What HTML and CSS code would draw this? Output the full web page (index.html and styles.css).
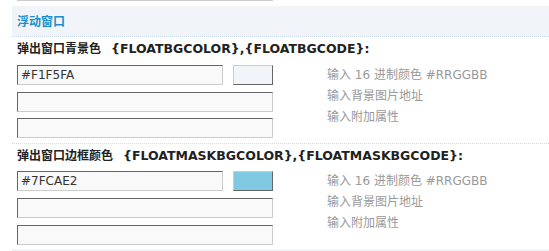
FILE: index.html
```html
<!DOCTYPE html>
<html>
<head>
<meta charset="utf-8">
<link rel="stylesheet" href="styles.css">
</head>
<body>
<div class="page">
  <div class="prev"></div>
  <div class="partition">浮动窗口</div>

  <div class="setting">
    <div class="label">弹出窗口青景色<span class="var">{FLOATBGCOLOR},{FLOATBGCODE}:</span></div>
    <div class="row">
      <div class="fields">
        <div class="line first">
          <input class="txt short" type="text" value="#F1F5FA">
          <span class="swatch" style="background:#F1F5FA"></span>
        </div>
        <div class="line second"><input class="txt" type="text" value=""></div>
        <div class="line"><input class="txt" type="text" value=""></div>
      </div>
      <div class="tips">
        <div>输入 16 进制颜色 #RRGGBB</div>
        <div>输入背景图片地址</div>
        <div>输入附加属性</div>
      </div>
    </div>
  </div>

  <div class="setting">
    <div class="label">弹出窗口边框颜色<span class="var">{FLOATMASKBGCOLOR},{FLOATMASKBGCODE}:</span></div>
    <div class="row">
      <div class="fields">
        <div class="line first">
          <input class="txt short" type="text" value="#7FCAE2">
          <span class="swatch" style="background:#7FCAE2"></span>
        </div>
        <div class="line second"><input class="txt" type="text" value=""></div>
        <div class="line"><input class="txt" type="text" value=""></div>
      </div>
      <div class="tips">
        <div>输入 16 进制颜色 #RRGGBB</div>
        <div>输入背景图片地址</div>
        <div>输入附加属性</div>
      </div>
    </div>
  </div>

  <div class="partition next"></div>
</div>
</body>
</html>
```
FILE: styles.css
```css
html, body {
  margin: 0;
  padding: 0;
  background: #fff;
}
body {
  font-family: "DejaVu Sans", Verdana, "Noto Sans CJK SC", sans-serif;
  font-size: 12px;
  color: #333;
  overflow: hidden;
}
.page {
  width: 537px;
  margin-left: 12px;
  padding-top: 0;
}
.prev {
  width: 256px;
  height: 1px;
  margin-left: 5px;
  background: #ccc;
}
.partition {
  margin-top: 5px;
  height: 30px;
  line-height: 29px;
  padding-left: 5px;
  background: #F1F5FA;
  border-bottom: 1px dotted #C9DDEE;
  color: #1A8FC9;
  font-weight: bold;
  font-family: "Noto Sans CJK SC", sans-serif;
  font-size: 12px;
}
.partition.next {
  margin-top: 0;
  border-bottom: none;
}
.setting + .setting {
  border-top: 1px dotted #C9DDEE;
}
.label {
  height: 22px;
  line-height: 22px;
  padding-left: 5px;
  font-weight: bold;
  color: #222;
  font-family: "Noto Sans CJK SC", sans-serif;
}
.var {
  font-family: "DejaVu Sans", Verdana, sans-serif;
  margin-left: 10px;
  font-size: 12.5px;
}
.row {
  display: grid;
  grid-template-columns: 310px 1fr;
  padding-top: 6px;
  padding-bottom: 5px;
}
.setting + .setting .row {
  padding-top: 5px;
  padding-bottom: 4px;
}
.fields {
  padding-left: 5px;
}
.line {
  display: flex;
  height: 20px;
}
.line.first {
  margin-bottom: 7px;
}
.line.second {
  margin-bottom: 6px;
}
.setting + .setting .line.second {
  margin-bottom: 7px;
}
.txt {
  box-sizing: border-box;
  width: 256px;
  height: 20px;
  margin: 0;
  padding: 0 3px;
  border: 1px solid;
  border-color: #666 #ccc #ccc #666;
  background: #F9F9F9;
  color: #333;
  font-family: "DejaVu Sans", Verdana, sans-serif;
  font-size: 12px;
  outline: none;
}
.txt.short {
  width: 206px;
}
.swatch {
  box-sizing: border-box;
  width: 40px;
  height: 20px;
  margin-left: 10px;
  border: 1px solid;
  border-color: #ccc #666 #666 #ccc;
}
.tips {
  padding-left: 5px;
  color: #999;
  line-height: 21px;
  font-size: 12px;
  font-family: "DejaVu Sans", Verdana, "Noto Sans CJK SC", sans-serif;
}
```
